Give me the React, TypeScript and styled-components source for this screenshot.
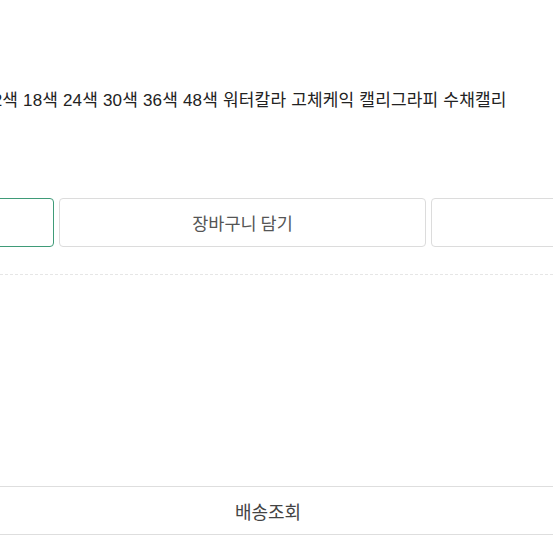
import React from "react";
import styled, { createGlobalStyle } from "styled-components";

const Global = createGlobalStyle`
  html, body {
    margin: 0;
    padding: 0;
    background: #ffffff;
    overflow: hidden;
  }
  body {
    font-family: "Liberation Sans", "Noto Sans CJK KR", sans-serif;
    color: #222;
  }
`;

const Page = styled.div`
  width: 553px;
  height: 553px;
  overflow: hidden;
  display: flex;
  flex-direction: column;
`;

const Summary = styled.p`
  margin: 90px 0 0 -17px;
  font-size: 17px;
  line-height: 22px;
  letter-spacing: 0.18px;
  white-space: nowrap;
  color: #222;
`;

const ActionRow = styled.div`
  margin: 86px 0 0 -47px;
  display: flex;
  gap: 5px;
`;

const ActionButton = styled.button<{ $w: number; $accent?: boolean }>`
  flex: 0 0 ${(p) => p.$w}px;
  height: 49px;
  box-sizing: border-box;
  border: 1px solid ${(p) => (p.$accent ? "#3f9b78" : "#dcdcdc")};
  border-radius: 4px;
  background: #fff;
  font-family: "Noto Sans CJK KR", sans-serif;
  font-size: 17.5px;
  color: #555;
  padding: 0;
  cursor: pointer;
`;

const Divider = styled.div`
  margin-top: 27px;
  border-top: 1px dashed #e6e6e6;
`;

const TrackLink = styled.a`
  margin: 211px 0 0 -22px;
  width: 580px;
  height: 49px;
  box-sizing: border-box;
  display: flex;
  align-items: center;
  justify-content: center;
  border-top: 1px solid #dedede;
  border-bottom: 1px solid #dedede;
  font-family: "Noto Sans CJK KR", sans-serif;
  font-size: 18px;
  color: #444;
  text-decoration: none;
`;

export default function App() {
  return (
    <>
      <Global />
      <Page>
        <Summary>
          12색 18색 24색 30색 36색 48색 워터칼라 고체케익 캘리그라피 수채캘리
        </Summary>
        <ActionRow>
          <ActionButton $w={101} $accent aria-label="바로구매" />
          <ActionButton $w={367}>장바구니 담기</ActionButton>
          <ActionButton $w={160} aria-label="관심상품" />
        </ActionRow>
        <Divider />
        <TrackLink href="#">배송조회</TrackLink>
      </Page>
    </>
  );
}
